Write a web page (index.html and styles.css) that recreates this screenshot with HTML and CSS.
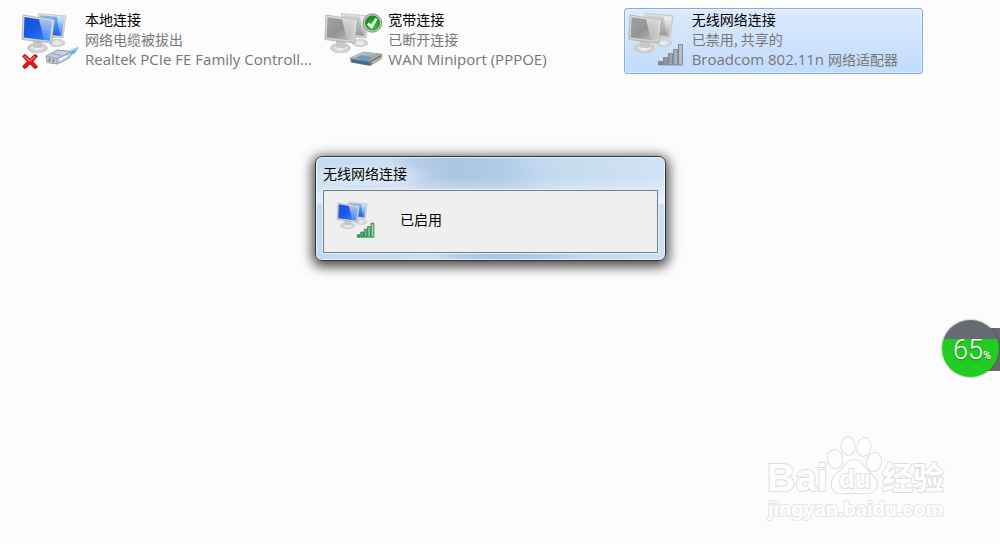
FILE: index.html
```html
<!DOCTYPE html>
<html lang="zh-CN">
<head>
<meta charset="utf-8">
<title>网络连接</title>
<link rel="stylesheet" href="styles.css">
</head>
<body>
<svg class="defs" aria-hidden="true">
  <defs>
    <linearGradient id="blue" x1="0" y1="0" x2="1" y2="1"><stop offset="0" stop-color="#1c50d0"/><stop offset=".5" stop-color="#1c5ce8"/><stop offset="1" stop-color="#2f90ff"/></linearGradient>
    <linearGradient id="blueBack" x1="0" y1="0" x2="0" y2="1"><stop offset="0" stop-color="#7fb8f8"/><stop offset=".5" stop-color="#3c86ee"/><stop offset="1" stop-color="#1560ee"/></linearGradient>
    <linearGradient id="gray" x1="0" y1="0" x2="1" y2="1"><stop offset="0" stop-color="#a2a2a2"/><stop offset=".5" stop-color="#939393"/><stop offset="1" stop-color="#c6c6c6"/></linearGradient>
    <linearGradient id="grayBack" x1="0" y1="0" x2="0" y2="1"><stop offset="0" stop-color="#d5d5d5"/><stop offset="1" stop-color="#969696"/></linearGradient>
    <linearGradient id="frame" x1="0" y1="0" x2="0" y2="1"><stop offset="0" stop-color="#e6e6e2"/><stop offset="1" stop-color="#cfcfcc"/></linearGradient>
    <linearGradient id="shine" x1="0" y1="0" x2="0" y2="1"><stop offset="0" stop-color="#fff" stop-opacity=".65"/><stop offset="1" stop-color="#fff" stop-opacity=".1"/></linearGradient>
    <radialGradient id="stand"><stop offset="0" stop-color="#f6f6f6"/><stop offset=".6" stop-color="#dcdcdc"/><stop offset="1" stop-color="#c4c4c4"/></radialGradient>
    <linearGradient id="barGray" x1="0" y1="0" x2="1" y2="0"><stop offset="0" stop-color="#7d848f"/><stop offset="1" stop-color="#b9c3d0"/></linearGradient>
    <linearGradient id="barGreen" x1="0" y1="0" x2="1" y2="0"><stop offset="0" stop-color="#3c9a5c"/><stop offset="1" stop-color="#a2dcae"/></linearGradient>
    <radialGradient id="tick" cx=".5" cy=".7"><stop offset="0" stop-color="#4fd03c"/><stop offset="1" stop-color="#18921c"/></radialGradient>
    <linearGradient id="modemTop" x1="0" y1="0" x2="1" y2="1"><stop offset="0" stop-color="#d4d4d4"/><stop offset="1" stop-color="#8c8c8c"/></linearGradient>
    <g id="shell">
      <ellipse cx="38" cy="33" rx="8" ry="4" fill="url(#stand)"/>
      <path d="M19.500 3.500 47 6 44 28 20 26z" fill="url(#frame)" stroke="#b9b9b6" stroke-width=".7"/>
    </g>
    <g id="front">
      <ellipse cx="18.500" cy="38" rx="10" ry="4.800" fill="url(#stand)" stroke="#c4c4c4" stroke-width=".6"/>
      <path d="M14 30h9l1 7q-5 2-10 0z" fill="#c6c6c6"/>
      <path d="M4 5 35.500 10 32.500 33 3 29.500z" fill="url(#frame)" stroke="#a9a9a6" stroke-width=".8"/>
    </g>
    <g id="monitorsBlue">
      <use href="#shell"/><path d="M21 5.200 45 7.500 42.500 26 33 25 35 9 21 7z" fill="url(#blueBack)"/><path d="M38 6.800 45 7.500 42.500 26 40.500 25.800z" fill="url(#shine)"/>
      <use href="#front"/><path d="M5.500 7 33 11.300 30.700 30.700 4.700 27.600z" fill="url(#blue)"/><path d="M20 9.200 33 11.300 30.700 30.700 25 30z" fill="url(#shine)"/>
    </g>
    <g id="monitorsGray">
      <use href="#shell"/><path d="M21 5.200 45 7.500 42.500 26 33 25 35 9 21 7z" fill="url(#grayBack)"/><path d="M38 6.800 45 7.500 42.500 26 40.500 25.800z" fill="url(#shine)"/>
      <use href="#front"/><path d="M5.500 7 33 11.300 30.700 30.700 4.700 27.600z" fill="url(#gray)"/><path d="M20 9.200 33 11.300 30.700 30.700 25 30z" fill="url(#shine)"/>
    </g>
    <path id="bars" d="M32.500 51.500h4V55h-4zM37.500 47.500h4V55h-4zM42.500 43.500h4V55h-4zM47.500 39.500h4V55h-4zM52.500 34.500h4V55h-4z"/>
  </defs>
</svg>

<main class="connections">
  <article class="connection">
    <svg class="connection-icon" viewBox="0 0 64 60" aria-hidden="true">
      <use href="#monitorsBlue"/>
      <path d="M47 43 52 39.500 60 37 55 44z" fill="#52b5e2"/><path d="M51 41 58 38" stroke="#a5e2f8" stroke-width="1.500"/>
      <path d="M27 46 33 43 38 40 49 41 53 44 50 48 43 52 38 54 28 52.500z" fill="#c6cfe0" stroke="#8c97ac" stroke-width=".9"/>
      <path d="M28 46.500 38 48.500 38 53.500M38 48.500 50 43M33 43.500 42 45.500" fill="none" stroke="#8794ae" stroke-width=".9"/>
      <path d="M29.500 48.500h2v3h-2zM33.500 49.200h2v3h-2z" fill="#8d8260"/><path d="M40 49 48 45V47L41 51z" fill="#f2f6fc"/>
      <path d="M3.500 46.500Q5 43.500 7 45L11 49 15 45Q17.500 43.500 18.500 46.500L14 51.500 18.500 56.500Q17.500 59.500 15 58L11 54 7 58Q5 59.500 3.500 56.500L8 51.500z" fill="#df1818" stroke="#a60e0e" stroke-width=".7"/>
      <path d="M5.500 46.500 10.500 51 16 46.500" fill="none" stroke="#ff7870" stroke-width="1.200"/>
    </svg>
    <div class="connection-text">
      <h2>本地连接</h2>
      <p>网络电缆被拔出</p>
      <p class="device">Realtek PCIe FE Family Controll...</p>
    </div>
  </article>
  <article class="connection">
    <svg class="connection-icon" viewBox="0 0 64 60" aria-hidden="true">
      <use href="#monitorsGray"/>
      <circle cx="50.500" cy="13" r="9.200" fill="#c3c7c9" stroke="#8b8f91"/><circle cx="50.500" cy="13" r="7.500" fill="url(#tick)"/>
      <path d="M46 13.500 49.500 17 54.500 8.500" fill="none" stroke="#fff" stroke-width="2.600"/>
      <path d="M28 48 41 42 60 44 59.500 49 48 56 29 52.500z" fill="#7a7a7a"/>
      <path d="M28 48 41 42 60 44 48 51z" fill="url(#modemTop)" stroke="#aaa" stroke-width=".6"/>
      <path d="M29.500 49.500 47 52.500V55L30 52z" fill="#346c92"/><path d="M33 48 40 45 50 47 45 51z" fill="#5aa0c6"/><path d="M50 52 59 47V48.500L50 54z" fill="#c2c2c2"/>
    </svg>
    <div class="connection-text">
      <h2>宽带连接</h2>
      <p>已断开连接</p>
      <p class="device">WAN Miniport (PPPOE)</p>
    </div>
  </article>
  <article class="connection selected">
    <svg class="connection-icon" viewBox="0 0 64 60" aria-hidden="true">
      <use href="#monitorsGray"/>
      <use href="#bars" fill="url(#barGray)" stroke="#7c838f" stroke-width=".9"/>
    </svg>
    <div class="connection-text">
      <h2>无线网络连接</h2>
      <p>已禁用, 共享的</p>
      <p class="device">Broadcom 802.11n <span class="han">网络适配器</span></p>
    </div>
  </article>
</main>

<section class="dialog" role="dialog" aria-labelledby="dialog-title">
  <h1 id="dialog-title">无线网络连接</h1>
  <div class="dialog-body">
    <svg class="dialog-icon" viewBox="0 0 64 60" aria-hidden="true">
      <use href="#monitorsBlue"/>
      <use href="#bars" fill="url(#barGreen)" stroke="#267c45" stroke-width="1.200"/>
    </svg>
    <p>已启用</p>
  </div>
</section>

<aside class="meter">
  <div class="meter-tab"></div>
  <div class="meter-ball"><span class="meter-value">65</span><span class="meter-unit">%</span></div>
</aside>

<svg class="watermark" viewBox="0 0 190 95" role="img" aria-label="Baidu 经验">
  <g class="watermark-shape">
    <ellipse cx="83" cy="14" rx="6.500" ry="9"/>
    <ellipse cx="99" cy="15" rx="6.500" ry="9" transform="rotate(10 99 15)"/>
    <ellipse cx="70" cy="27" rx="7" ry="9" transform="rotate(-12 70 27)"/>
    <ellipse cx="109" cy="30" rx="7" ry="9" transform="rotate(12 109 30)"/>
    <path d="M89 28C82 28 79 36 74 40 67 45 65 52 68 57 71 63 79 61 89 61 99 61 107 63 111 57 114 51 110 45 104 40 99 36 97 28 89 28z"/>
    <text class="mark-bai" x="2" y="59">Bai</text>
    <text class="mark-du" x="74" y="56">du</text>
    <text class="mark-jingyan" x="117" y="57">经验</text>
    <text class="mark-url" x="3" y="84">jingyan.baidu.com</text>
  </g>
</svg>
</body>
</html>
```

FILE: styles.css
```css
* {
  box-sizing: border-box;
}

body {
  margin: 0;
  min-height: 100vh;
  position: relative;
  overflow: hidden;
  background: #fcfcfc;
  color: #000;
  font: 14px/20px "Noto Sans CJK SC", sans-serif;
}

h1, h2, p {
  margin: 0;
  font-size: 14px;
  font-weight: 400;
}

.defs {
  position: absolute;
  width: 0;
  height: 0;
}

.connections {
  display: grid;
  grid-template-columns: repeat(3, 1fr);
  gap: 4px;
  padding: 8px 77px 0 17px;
}

.connection {
  display: flex;
  gap: 2px;
  min-width: 0;
  padding: 0 1px 2px;
  border: 1px solid transparent;
  border-radius: 3px;
}

.selected {
  border-color: #84acdd;
  background: linear-gradient(#dceafc, #c1dbfc);
  box-shadow: inset 0 0 0 1px #ffffff66;
}

.connection-icon {
  flex: none;
  width: 64px;
  height: 62px;
}

.connection-text {
  min-width: 0;
  white-space: nowrap;
}

.connection-text p {
  color: #777;
}

.connection-text .device {
  font-family: "Open Sans", "Noto Sans CJK SC", sans-serif;
  font-size: 15px;
}

.connection-text .han {
  font-family: "Noto Sans CJK SC", sans-serif;
  font-size: 14px;
}

.dialog {
  position: absolute;
  top: 156px;
  left: calc(50% - 185px);
  width: 351px;
  padding: 6px 7px 7px;
  border: 1px solid #30363d;
  border-radius: 7px;
  background:
    radial-gradient(ellipse at 50px 18px, #ffffff99, #ffffff00 70px) 0 0 / 160px 36px no-repeat,
    linear-gradient(#ffffff00 20px, #ffffff99 46px, #ffffff00 47px) 0 0 / 100% 48px no-repeat,
    linear-gradient(65deg, #c3d9f0 0%, #cbdef2 30%, #b7cfe8 36%, #a9c6e2 45%, #b0cce7 58%, #c4d9ee 68%, #cbdff2 85%, #d2e3f5 100%);
  box-shadow: inset 0 0 0 1px #f0f7ffcc, 0 3px 12px 3px #000000b0;
}

.dialog h1 {
  padding-bottom: 7px;
}

.dialog-body {
  display: flex;
  align-items: center;
  gap: 21px;
  height: 63px;
  padding: 0 10px 6px 11px;
  border: 1px solid #747f8c;
  background: #efefef;
  box-shadow: 0 0 0 1px #e4effa;
}

.dialog-icon {
  width: 44px;
  height: 42px;
}

.dialog-body svg {
  margin-top: 3px;
}

.meter {
  position: absolute;
  top: 320px;
  right: 0;
  width: 58px;
  height: 57px;
}

.meter-tab {
  position: absolute;
  top: 8px;
  right: 0;
  width: 12px;
  height: 43px;
  background: #666872;
}

.meter-ball {
  position: relative;
  display: flex;
  align-items: baseline;
  justify-content: center;
  width: 57px;
  height: 57px;
  padding-left: 3px;
  border-radius: 50%;
  background: linear-gradient(#686a73 19px, #22cd22 19px);
  box-shadow: 0 0 2px #00000080;
  color: #fff;
  text-shadow: 0 1px 2px #00000066;
}

.meter-value {
  font: 300 27px/60px Roboto, sans-serif;
}

.meter-unit {
  font: 500 11px/60px Roboto, sans-serif;
}

.watermark {
  position: absolute;
  right: 45px;
  bottom: 17px;
  width: 190px;
  height: 95px;
  overflow: visible;
}

.watermark-shape {
  fill: #fefefe;
  stroke: #dedede;
  stroke-width: 2px;
  stroke-linejoin: round;
  paint-order: stroke;
  font-family: "Liberation Sans", sans-serif;
  font-weight: 700;
}

.mark-bai {
  font-size: 39px;
}

.mark-du {
  font-size: 26px;
}

.mark-jingyan {
  font-family: "Noto Sans CJK SC", sans-serif;
  font-size: 31px;
}

.mark-url {
  font-size: 20px;
  stroke: #e6e6e6;
}
```
